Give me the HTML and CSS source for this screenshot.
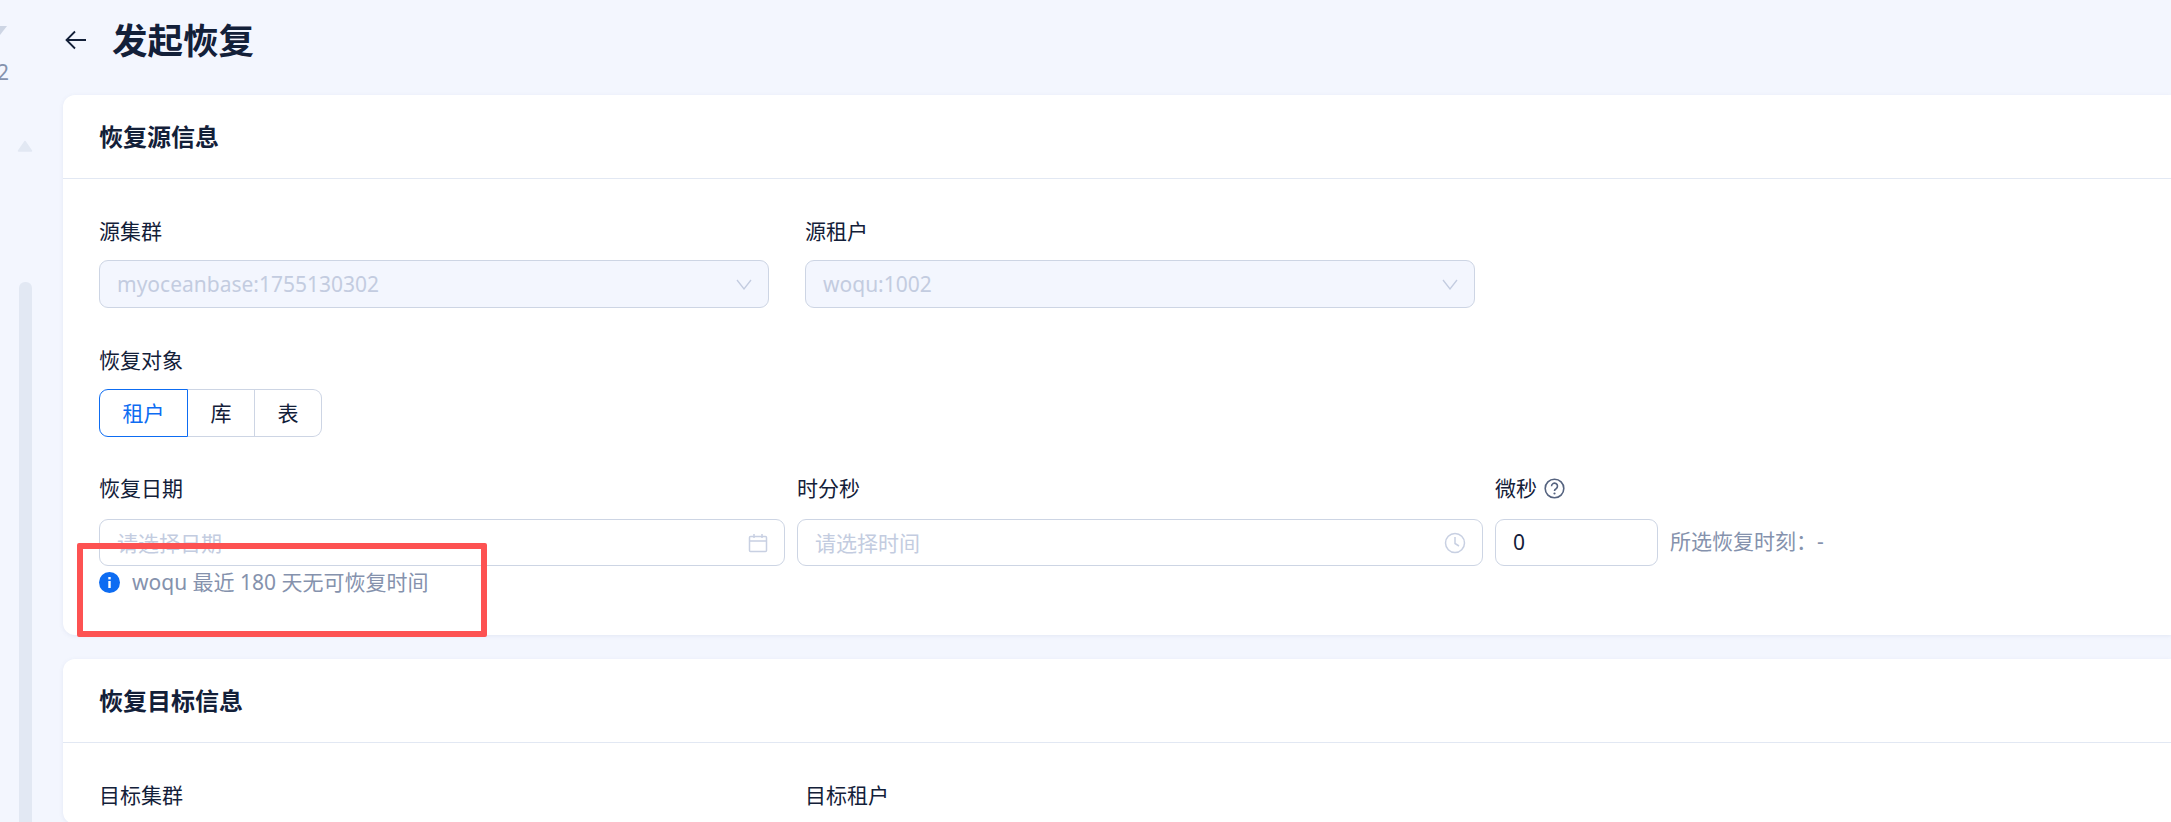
FILE: index.html
```html
<!DOCTYPE html>
<html lang="zh-CN">
<head>
<meta charset="utf-8">
<title>发起恢复</title>
<link rel="stylesheet" href="styles.css">
</head>
<body>
<div class="app">
  <aside class="rail">
    <svg class="tri-down" width="8" height="9" viewBox="0 0 8 9"><path d="M-8 0H7L0 9z" fill="#cdd5e4"/></svg>
    <span class="rail-num">2</span>
    <svg class="tri-up" width="16" height="12" viewBox="0 0 16 12"><path d="M8 1.500 14.500 11H1.500z" fill="#e2e8f3" stroke="#e2e8f3" stroke-width="1.500" stroke-linejoin="round"/></svg>
    <div class="scrollbar"></div>
  </aside>
  <main class="main">
    <header class="page-head">
      <svg class="back" width="22" height="22" viewBox="0 0 22 22"><path d="M21 11H2M10 2.500 1.500 11 10 19.500" fill="none" stroke="#132039" stroke-width="1.800"/></svg>
      <h1 class="page-title">发起恢复</h1>
    </header>

    <section class="card card-source">
      <h2 class="card-title">恢复源信息</h2>
      <div class="card-body">
        <div class="row-pair">
          <div class="field">
            <label class="label">源集群</label>
            <div class="control disabled"><span>myoceanbase:1755130302</span>
              <svg class="chev" width="16" height="11" viewBox="0 0 16 11"><path d="M1 1l7 9 7-9" fill="none" stroke="#c3cce0" stroke-width="1.300"/></svg>
            </div>
          </div>
          <div class="field">
            <label class="label">源租户</label>
            <div class="control disabled"><span>woqu:1002</span>
              <svg class="chev" width="16" height="11" viewBox="0 0 16 11"><path d="M1 1l7 9 7-9" fill="none" stroke="#c3cce0" stroke-width="1.300"/></svg>
            </div>
          </div>
        </div>

        <label class="label label-object">恢复对象</label>
        <div class="segmented">
          <button class="seg seg-active">租户</button>
          <button class="seg">库</button>
          <button class="seg">表</button>
        </div>

        <div class="row-time">
          <div class="field">
            <label class="label">恢复日期</label>
            <div class="control"><span class="placeholder">请选择日期</span>
              <svg class="suffix" width="20" height="20" viewBox="0 0 20 20" fill="none" stroke="#c8d0e2" stroke-width="1.500"><rect x="1.500" y="3.500" width="17" height="15" rx="1"/><path d="M1.500 8h17M6 1v4M14 1v4"/></svg>
            </div>
          </div>
          <div class="field">
            <label class="label">时分秒</label>
            <div class="control"><span class="placeholder">请选择时间</span>
              <svg class="suffix" width="22" height="22" viewBox="0 0 22 22" fill="none" stroke="#c8d0e2" stroke-width="1.500"><circle cx="11" cy="11" r="9.500"/><path d="M11 5v6.500l4 2.500"/></svg>
            </div>
          </div>
          <div class="field">
            <label class="label">微秒
              <svg class="help" width="21" height="21" viewBox="0 0 21 21"><circle cx="10.500" cy="10.500" r="9.300" fill="none" stroke="#55637f" stroke-width="1.600"/><path d="M7.500 8.200a3 3 0 1 1 4.600 2.500c-1 .6-1.600 1.200-1.600 2.300" fill="none" stroke="#55637f" stroke-width="1.600"/><circle cx="10.500" cy="15.500" r="1.100" fill="#55637f"/></svg>
            </label>
            <div class="control"><span class="value">0</span></div>
          </div>
          <div class="moment">所选恢复时刻：-</div>
        </div>

        <div class="hint">
          <svg width="21" height="21" viewBox="0 0 21 21"><circle cx="10.500" cy="10.500" r="10.500" fill="#0d6cf2"/><rect x="9.300" y="9" width="2.400" height="7" fill="#fff"/><rect x="9.300" y="5" width="2.400" height="2.400" fill="#fff"/></svg>
          <span class="hint-text">woqu 最近 180 天无可恢复时间</span>
        </div>
      </div>
      <div class="annotation"></div>
    </section>

    <section class="card">
      <h2 class="card-title">恢复目标信息</h2>
      <div class="card-body">
        <div class="row-pair">
          <div class="field"><label class="label">目标集群</label></div>
          <div class="field"><label class="label">目标租户</label></div>
        </div>
      </div>
    </section>
  </main>
</div>
</body>
</html>
```
FILE: styles.css
```css
* { box-sizing: border-box; }
html, body { margin: 0; height: 100%; overflow: hidden; }
body {
  background: #f3f6fe;
  color: #132039;
  font-family: "Noto Sans", "Noto Sans CJK SC", sans-serif;
  font-size: 21px;
}
.app { display: flex; height: 822px; overflow: hidden; }
.rail {
  width: 63px;
  flex: none;
  display: flex;
  flex-direction: column;
  align-items: flex-start;
  padding-top: 26px;
  overflow: hidden;
}
.rail > * { flex: none; }
.tri-down { display: block; }
.rail-num {
  margin: 23px 0 0 -3px;
  height: 29px;
  line-height: 29px;
  font-size: 21px;
  color: #8592ad;
}
.tri-up { display: block; margin: 53px 0 0 17px; }
.scrollbar {
  width: 13px;
  height: 600px;
  margin: 130px 0 0 19px;
  border-radius: 6px 6px 0 0;
  background: #e2e8f3;
}
.main { flex: 1; min-width: 0; }
.page-head {
  height: 95px;
  padding: 0 0 15px 2px;
  display: flex;
  align-items: center;
  gap: 25px;
}
.back { flex: none; }
.page-title { margin: 0; font-size: 35.500px; font-weight: 700; line-height: 48px; }
.card {
  position: relative;
  background: #fff;
  border-radius: 12px 0 0 12px;
  box-shadow: 0 1px 4px rgba(90, 110, 160, .10);
  margin-bottom: 24px;
}
.card-source { height: 540px; }
.card-title {
  margin: 0;
  height: 84px;
  padding: 0 36px 2px;
  display: flex;
  align-items: center;
  font-size: 24px;
  font-weight: 700;
  border-bottom: 1px solid #e2e8f3;
}
.card-body { padding: 38px 36px 0; }
.row-pair { display: flex; gap: 36px; }
.row-pair .field { width: 670px; }
.label {
  display: flex;
  align-items: center;
  gap: 7px;
  height: 28px;
  line-height: 28px;
  margin-bottom: 15px;
}
.control {
  height: 48px;
  display: flex;
  align-items: center;
  justify-content: space-between;
  padding: 0 17px;
  border: 1px solid #cdd5e4;
  border-radius: 9px;
  background: #fff;
}
.control.disabled { background: #f3f6fe; color: #c3cce0; padding-right: 16px; }
.placeholder { color: #c3cce0; }
.value { color: #132039; }
.label-object { margin-top: 38px; }
.segmented { display: flex; width: 223px; height: 48px; }
.seg {
  font: inherit;
  color: #132039;
  background: #fff;
  border: 1px solid #cdd5e4;
  border-left: 0;
  padding: 0 0 2px;
  flex: 1;
}
.seg:last-child { border-radius: 0 9px 9px 0; }
.seg-active {
  flex: none;
  width: 89px;
  color: #0d6cf2;
  border: 1px solid #0d6cf2;
  border-radius: 9px 0 0 9px;
}
.row-time {
  display: grid;
  grid-template-columns: 686px 686px 163px auto;
  column-gap: 12px;
  margin-top: 37px;
  align-items: end;
}
.row-time .label { margin-bottom: 17px; }
.row-time .control { height: 47px; padding-bottom: 2px; }
.row-time .control .suffix { margin: 2px -1px 0 0; }
.moment { height: 47px; line-height: 45px; color: #8592ad; font-size: 21px; }
.hint {
  display: flex;
  align-items: center;
  gap: 12px;
  margin-top: 6px;
  height: 21px;
  color: #8592ad;
}
.hint svg { flex: none; }
.hint-text { margin-top: -3px; }
.annotation {
  position: absolute;
  left: 14px;
  top: 448px;
  width: 410px;
  height: 94px;
  border: 6px solid #fd5252;
  border-radius: 2px;
}
```
